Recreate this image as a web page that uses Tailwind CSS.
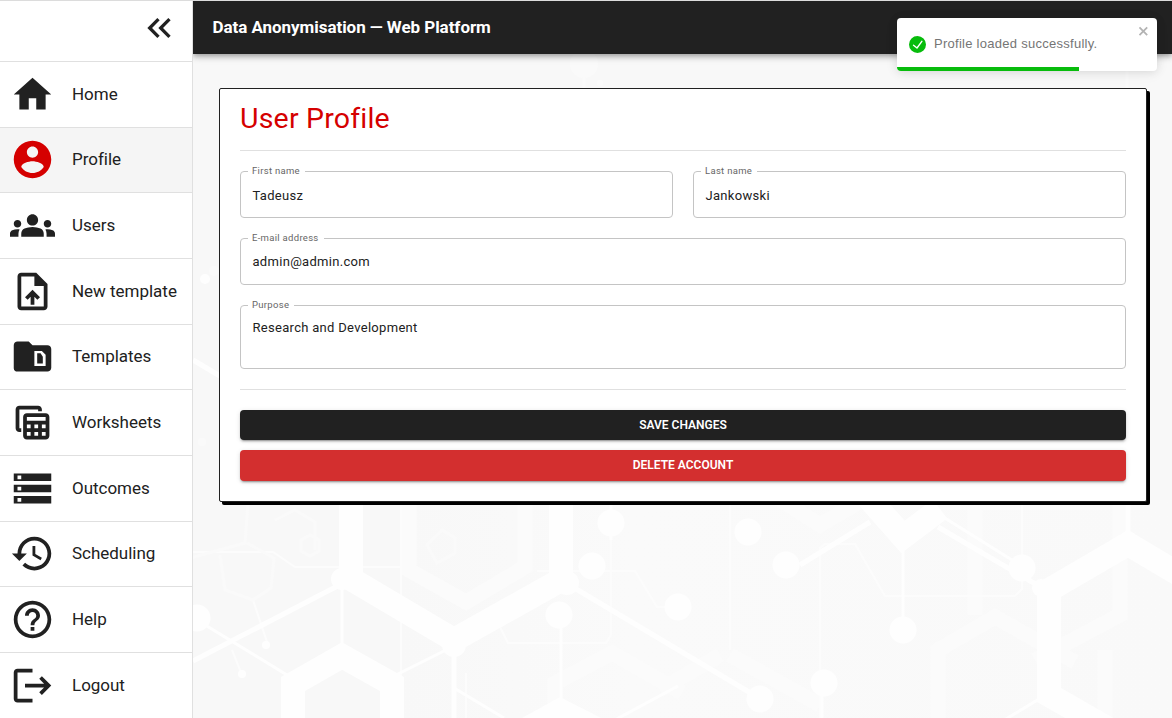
<!DOCTYPE html>
<html lang="en">
<head>
<meta charset="utf-8">
<title>Data Anonymisation — Web Platform</title>
<script src="https://cdn.jsdelivr.net/npm/@tailwindcss/browser@4"></script>
</head>
<body class="relative flex h-[718px] w-[1172px] overflow-hidden border-t border-[#dcdcdc] bg-[#f8f8f8] font-[Roboto,sans-serif] text-[#212121]">

<!-- Sidebar -->
<aside class="z-10 flex w-[193px] shrink-0 flex-col border-r border-[#e0e0e0] bg-white">
  <div class="flex h-[61px] shrink-0 items-start justify-end border-b border-[#e0e0e0] pt-[7px] pr-[12.6px]">
    <svg class="size-10" viewBox="0 0 24 24" fill="#212121"><path d="M17.59 18 19 16.59 14.42 12 19 7.41 17.59 6l-6 6z"/><path d="m11 18 1.41-1.41L7.83 12l4.58-4.59L11 6l-6 6z"/></svg>
  </div>
  <nav class="flex flex-col text-[17px] tracking-[-0.02px]">
    <a class="flex h-[65.67px] items-center gap-[17px] border-b border-[#e0e0e0] pl-[10px]">
      <svg class="size-[45px]" viewBox="0 0 24 24" fill="#212121"><path d="M10 20v-6h4v6h5v-8h3L12 3 2 12h3v8z"/></svg>Home</a>
    <a class="flex h-[65.67px] items-center gap-[17px] border-b border-[#e0e0e0] bg-[#f5f5f5] pl-[10px]">
      <svg class="size-[45px]" viewBox="0 0 24 24" fill="#d50000"><path d="M12 2C6.48 2 2 6.48 2 12s4.48 10 10 10 10-4.480 10-10S17.520 2 12 2zm0 3c1.660 0 3 1.340 3 3s-1.340 3-3 3-3-1.340-3-3 1.340-3 3-3zm0 14.200c-2.500 0-4.710-1.280-6-3.220.03-1.990 4-3.080 6-3.080 1.990 0 5.970 1.090 6 3.080-1.290 1.940-3.500 3.220-6 3.220z"/></svg>Profile</a>
    <a class="flex h-[65.67px] items-center gap-[17px] border-b border-[#e0e0e0] pl-[10px]">
      <svg class="size-[45px]" viewBox="0 0 24 24" fill="#212121"><path d="M12 12.75c1.63 0 3.07.39 4.24.9 1.08.48 1.76 1.56 1.76 2.73V18H6v-1.61c0-1.18.68-2.26 1.76-2.73 1.17-.52 2.61-.91 4.24-.91zM4 13c1.1 0 2-.9 2-2s-.9-2-2-2-2 .9-2 2 .9 2 2 2zm1.13 1.1c-.37-.06-.74-.1-1.13-.1-.99 0-1.93.21-2.78.58C.48 14.9 0 15.62 0 16.43V18h4.5v-1.61c0-.83.23-1.61.63-2.29zM20 13c1.1 0 2-.9 2-2s-.9-2-2-2-2 .9-2 2 .9 2 2 2zm4 3.43c0-.81-.48-1.53-1.22-1.85-.85-.37-1.79-.58-2.78-.58-.39 0-.76.04-1.13.1.4.68.63 1.46.63 2.29V18H24v-1.57zM12 6c1.66 0 3 1.34 3 3s-1.34 3-3 3-3-1.34-3-3 1.34-3 3-3z"/></svg>Users</a>
    <a class="flex h-[65.67px] items-center gap-[17px] border-b border-[#e0e0e0] pl-[10px]">
      <svg class="size-[45px]" viewBox="0 0 24 24" fill="#212121"><path d="M14 2H6c-1.1 0-1.99.9-1.99 2L4 20c0 1.1.89 2 1.99 2H18c1.1 0 2-.9 2-2V8l-6-6zm4 18H6V4h7v5h5v11zM8 15.01l1.41 1.41L11 14.84V19h2v-4.16l1.59 1.59L16 15.01 12.01 11z"/></svg>New template</a>
    <a class="flex h-[65.67px] items-center gap-[17px] border-b border-[#e0e0e0] pl-[10px]">
      <svg class="size-[45px]" viewBox="0 0 24 24" fill="#212121"><path fill-rule="evenodd" d="M20 6h-8l-2-2H4c-1.1 0-2 .9-2 2v12.2c0 1.1.9 1.8 2 1.8h16c1.1 0 2-.9 2-2V8c0-1.1-.9-2-2-2zM13 9h4l2 2v6h-6zM14.500 10.300v5.400h3v-3.600l-1.200-1.800z"/></svg>Templates</a>
    <a class="flex h-[65.67px] items-center gap-[17px] border-b border-[#e0e0e0] pl-[10px]">
      <svg class="size-[45px]" viewBox="0 0 24 24" fill="#212121"><path fill-rule="evenodd" d="M19 7H9c-1.100 0-2 .9-2 2v10c0 1.100.9 2 2 2h10c1.100 0 2-.9 2-2V9c0-1.100-.9-2-2-2zm0 2v2H9V9h10zm-6 6v-2h2v2h-2zm2 2v2h-2v-2h2zm-4-2H9v-2h2v2zm6-2h2v2h-2v-2zm-8 4h2v2H9v-2zm8 2v-2h2v2h-2zM6 17H5c-1.100 0-2-.9-2-2V5c0-1.100.9-2 2-2h10c1.100 0 2 .9 2 2v1h-2V5H5v10h1v2z"/></svg>Worksheets</a>
    <a class="flex h-[65.67px] items-center gap-[17px] border-b border-[#e0e0e0] pl-[10px]">
      <svg class="size-[45px]" viewBox="0 0 24 24" fill="#212121"><path d="M2 20h20v-4H2v4zm2-3h2v2H4v-2zM2 4v4h20V4H2zm4 3H4V5h2v2zm-4 7h20v-4H2v4zm2-3h2v2H4v-2z"/></svg>Outcomes</a>
    <a class="flex h-[65.67px] items-center gap-[17px] border-b border-[#e0e0e0] pl-[10px]">
      <svg class="size-[45px]" viewBox="0 0 24 24" fill="#212121"><path d="M13 3c-4.970 0-9 4.030-9 9H1l3.890 3.890.07.140L9 12H6c0-3.870 3.130-7 7-7s7 3.130 7 7-3.130 7-7 7c-1.930 0-3.680-.790-4.940-2.060l-1.420 1.420C8.270 19.990 10.510 21 13 21c4.970 0 9-4.030 9-9s-4.030-9-9-9zm-1 5v5l4.280 2.540.72-1.210-3.500-2.080V8H12z"/></svg>Scheduling</a>
    <a class="flex h-[65.67px] items-center gap-[17px] border-b border-[#e0e0e0] pl-[10px]">
      <svg class="size-[45px]" viewBox="0 0 24 24" fill="#212121"><path d="M11 18h2v-2h-2v2zm1-16C6.480 2 2 6.480 2 12s4.480 10 10 10 10-4.480 10-10S17.520 2 12 2zm0 18c-4.410 0-8-3.590-8-8s3.590-8 8-8 8 3.590 8 8-3.590 8-8 8zm0-14c-2.210 0-4 1.790-4 4h2c0-1.100.9-2 2-2s2 .9 2 2c0 2-3 1.750-3 5h2c0-2.250 3-2.500 3-5 0-2.210-1.790-4-4-4z"/></svg>Help</a>
    <a class="flex h-[65.67px] items-center gap-[17px] pl-[10px]">
      <svg class="size-[45px]" viewBox="0 0 24 24" fill="#212121"><path d="M4 3h8v2H4v14h8v2H4c-1.100 0-2-.9-2-2V5c0-1.100.9-2 2-2zM17 7l-1.410 1.410L18.170 11H8v2h10.170l-2.580 2.580L17 17l5-5z"/></svg>Logout</a>
  </nav>
</aside>

<!-- Decorative hexagon network behind the content -->
<svg class="absolute -top-px left-0 h-[718px] w-[1172px]" viewBox="0 0 1172 718" fill="none">
  <defs><linearGradient id="fade"><stop offset="0" stop-color="#f8f8f8"/><stop offset=".3" stop-color="#fafafa"/><stop offset="1" stop-color="#f9f9f9"/></linearGradient></defs>
  <rect x="400" y="500" width="772" height="218" fill="url(#fade)"/>
  <g stroke="#fbfbfb" stroke-width="15">
    <path d="M409 490v80l57 32 59-35v-77M765 490l55 35 60-35M975 510v105M1120 490v125l-85 45M938 718v-68l57-33 80 45M555 718v-35l57-30 70 40M720 655l-60 35M730 655l90 50M1105 650v68"/>
  </g>
  <g stroke="#fcfcfc" stroke-width="2">
    <path d="M193 552h80l22 15h105M401 500v218M611 500v135l-5 8h-98l-10-20M537 571h98l22 36h15M820 718V548l5-4h30l30 52h130l7-7v-99M730 490v160M466 718v-45M253 600l15 45M232 650l10 25"/>
  </g>
  <g stroke="#fafafa" stroke-width="3">
    <path d="M248 503l-3 40-55 15M220 555l5 35 28 10 18-12 3-30-27-15M275 520l20-10 20 12v28M427 545l10 18 18-10v-15l-13-8zM301 540l9-5 9 5v11l-9 5-9-5z"/>
  </g>
  <g stroke="#fefefe">
    <path stroke-width="24" d="M351 495v84l103 61 107-60v-85M293 718v-34l49-28 50 28v34M866 495l37 42 37-28M1049 590v105l70 40M1049 590l79-46 54 32"/>
    <path stroke-width="5" d="M193 661l158-82M561 580l198 118M800 565l70-43M938 527l111 65M1128 490v54M454 640v78"/>
    <path stroke-width="3" d="M342 580v66M197 620l90 55M454 646l-60 30M611 500v40M561 620v90M903 545v85M940 515l80 50M822 680v38M1049 693l-58 35M454 688l50 30M678 686l-65 35"/>
  </g>
  <g fill="#fefefe">
    <circle cx="342" cy="579" r="11"/><circle cx="454" cy="645" r="12"/><circle cx="567" cy="583" r="12"/><circle cx="1041" cy="588" r="9"/><circle cx="1128" cy="540" r="9"/>
    <circle cx="611" cy="523" r="13.500"/><circle cx="592" cy="566" r="13.500"/><circle cx="559" cy="615" r="13.500"/><circle cx="678" cy="607" r="13.500"/><circle cx="748" cy="532" r="13.500"/><circle cx="786" cy="565" r="13.500"/><circle cx="903" cy="630" r="13.500"/><circle cx="1022" cy="568" r="13.500"/><circle cx="824" cy="683" r="13.500"/><circle cx="760" cy="699" r="13.500"/><circle cx="197" cy="618" r="13.500"/>
    <circle cx="266" cy="645" r="4"/><circle cx="242" cy="674" r="4"/><circle cx="205" cy="279" r="5"/>
    <path d="M560 697l-38 21h79z"/>
  </g>
  <g fill="#fafafa"><circle cx="584" cy="64" r="14"/><circle cx="202" cy="442" r="4"/><circle cx="214" cy="271" r="5"/><circle cx="600" cy="83" r="3"/></g>
  <path d="M193 360l27 16" stroke="#fefefe" stroke-width="5"/>
  <path d="M584 70v18M1127 60v28" stroke="#fafafa" stroke-width="3"/>
</svg>

<!-- Main column -->
<div class="relative flex grow flex-col">
  <header class="flex h-[53px] items-center bg-[#212121] pl-[19.5px] text-[17px] font-bold tracking-[-0.05px] text-white shadow-[0_2px_4px_-1px_rgba(0,0,0,0.2),0_4px_5px_0_rgba(0,0,0,0.14),0_1px_10px_0_rgba(0,0,0,0.12)]">Data Anonymisation — Web Platform</header>

  <main class="mt-[34px] ml-[26px] flex h-[414px] w-[928px] flex-col rounded-[2px] border border-[#212121] bg-white px-[20px] shadow-[3px_3px_0_0_#000]">
    <h1 class="flex h-[62px] items-center border-b border-[#e0e0e0] text-[28.5px] tracking-[0.2px] text-[#d50000]">User Profile</h1>
    <div class="mt-[13px] grid grid-cols-2 gap-x-[20px] gap-y-[13px] text-[13px] tracking-[0.3px]">
      <fieldset class="h-[54px] rounded-[4px] border border-[#c4c4c4] px-[7px]"><legend class="h-[15px] pr-[5px] pl-[4px] text-[9.5px] leading-[13px] tracking-[0.3px] text-[#666]">First name</legend><div class="px-[4.5px] pt-[7px]">Tadeusz</div></fieldset>
      <fieldset class="h-[54px] rounded-[4px] border border-[#c4c4c4] px-[7px]"><legend class="h-[15px] pr-[5px] pl-[4px] text-[9.5px] leading-[13px] tracking-[0.3px] text-[#666]">Last name</legend><div class="px-[4.5px] pt-[7px]">Jankowski</div></fieldset>
      <fieldset class="col-span-2 h-[54px] rounded-[4px] border border-[#c4c4c4] px-[7px]"><legend class="h-[15px] pr-[5px] pl-[4px] text-[9.5px] leading-[13px] tracking-[0.3px] text-[#666]">E-mail address</legend><div class="px-[4.5px] pt-[6px]">admin@admin.com</div></fieldset>
      <fieldset class="col-span-2 h-[71px] rounded-[4px] border border-[#c4c4c4] px-[7px]"><legend class="h-[15px] pr-[5px] pl-[4px] text-[9.5px] leading-[13px] tracking-[0.3px] text-[#666]">Purpose</legend><div class="px-[4.5px] pt-[5px]">Research and Development</div></fieldset>
    </div>
    <hr class="mt-[20px] border-[#e0e0e0]">
    <button class="mt-[20px] h-[30px] shrink-0 rounded-[4px] bg-[#212121] text-[12px] font-semibold text-white shadow-[0_3px_1px_-2px_rgba(0,0,0,0.2),0_2px_2px_0_rgba(0,0,0,0.14),0_1px_5px_0_rgba(0,0,0,0.12)]">SAVE CHANGES</button>
    <button class="mt-[10px] h-[31px] shrink-0 rounded-[4px] bg-[#d32f2f] pb-[2px] text-[12px] font-semibold text-white shadow-[0_3px_1px_-2px_rgba(0,0,0,0.2),0_2px_2px_0_rgba(0,0,0,0.14),0_1px_5px_0_rgba(0,0,0,0.12)]">DELETE ACCOUNT</button>
  </main>
</div>

<!-- Toast notification -->
<div class="absolute top-[17px] left-[897px] z-20 flex h-[53px] w-[260px] items-center overflow-hidden rounded-[4px] bg-white pl-[12px] font-['Liberation_Sans',Arial,sans-serif] text-[13px] tracking-[0.27px] text-[#757575] shadow-[0_1px_10px_0_rgba(0,0,0,0.1),0_2px_15px_0_rgba(0,0,0,0.05)]">
  <svg class="mr-[8px] size-[17px]" viewBox="0 0 24 24" fill="#07bc0c"><path d="M12 0a12 12 0 1012 12A12.014 12.014 0 0012 0zm6.927 8.200l-6.845 9.289a1.011 1.011 0 01-1.430.188l-4.888-3.908a1 1 0 111.250-1.562l4.076 3.261 6.227-8.451a1 1 0 111.610 1.183z"/></svg>
  <span class="pb-[2px]">Profile loaded successfully.</span>
  <svg class="absolute top-[6px] right-[7px] h-[14px] w-[12px]" viewBox="0 0 14 16" fill="#b3b3b3"><path fill-rule="evenodd" d="M7.710 8.230l3.750 3.750-1.480 1.480-3.750-3.750-3.750 3.750L1 11.980l3.750-3.750L1 4.480 2.480 3l3.750 3.750L9.980 3l1.480 1.480-3.750 3.750z"/></svg>
  <div class="absolute bottom-0 left-0 h-[4px] w-[182px] bg-[#07bc0c]"></div>
</div>
</body>
</html>
